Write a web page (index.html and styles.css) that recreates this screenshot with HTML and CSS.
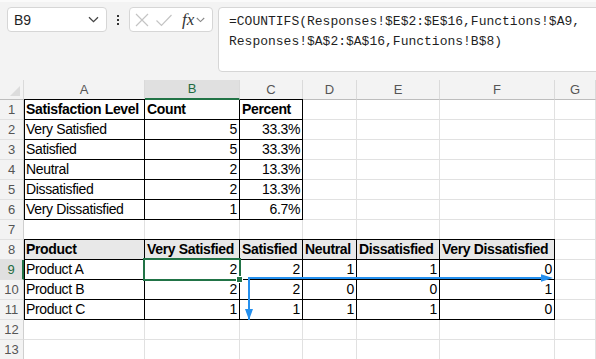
FILE: index.html
```html
<!DOCTYPE html>
<html>
<head>
    <meta charset="UTF-8">
    <link rel="stylesheet" href="styles.css">
</head>
<body>
    <!-- 编辑栏 -->
    <div class="bar">
        <div class="namebox">
            <span>B9</span>
            <svg class="chev" width="11" height="7" viewBox="0 0 11 7"><path d="M1 1.2 L5.5 5.6 L10 1.2" fill="none" stroke="#444" stroke-width="1.3"/></svg>
        </div>
        <div class="kebab"><i></i><i></i><i></i></div>
        <div class="fnbox">
            <svg width="16" height="16" viewBox="0 0 16 16"><path d="M2 2 L14 14 M14 2 L2 14" stroke="#c4c4c4" stroke-width="1.2"/></svg>
            <svg width="18" height="16" viewBox="0 0 18 16"><path d="M1.5 8.5 L6.5 13.5 L16.5 3" fill="none" stroke="#c4c4c4" stroke-width="1.2"/></svg>
            <span class="fx">fx</span>
            <svg width="9" height="6" viewBox="0 0 9 6"><path d="M0.8 1 L4.5 4.6 L8.2 1" fill="none" stroke="#888" stroke-width="1.1"/></svg>
        </div>
        <div class="formula">=COUNTIFS(Responses!$E$2:$E$16,Functions!$A9,<br>Responses!$A$2:$A$16,Functions!B$8)</div>
    </div>

    <!-- 表格 -->
    <div class="sheet">
        <div class="ch corner"></div><div class="ch">A</div><div class="ch sel">B</div><div class="ch">C</div><div class="ch">D</div><div class="ch">E</div><div class="ch">F</div><div class="ch">G</div>

        <div class="rh">1</div><div class="c b th tp lf">Satisfaction Level</div><div class="c b th tp">Count</div><div class="c b th tp">Percent</div><div class="c"></div><div class="c"></div><div class="c"></div><div class="c"></div>
        <div class="rh">2</div><div class="c b lf">Very Satisfied</div><div class="c b num">5</div><div class="c b num">33.3%</div><div class="c"></div><div class="c"></div><div class="c"></div><div class="c"></div>
        <div class="rh">3</div><div class="c b lf">Satisfied</div><div class="c b num">5</div><div class="c b num">33.3%</div><div class="c"></div><div class="c"></div><div class="c"></div><div class="c"></div>
        <div class="rh">4</div><div class="c b lf">Neutral</div><div class="c b num">2</div><div class="c b num">13.3%</div><div class="c"></div><div class="c"></div><div class="c"></div><div class="c"></div>
        <div class="rh">5</div><div class="c b lf">Dissatisfied</div><div class="c b num">2</div><div class="c b num">13.3%</div><div class="c"></div><div class="c"></div><div class="c"></div><div class="c"></div>
        <div class="rh">6</div><div class="c b lf">Very Dissatisfied</div><div class="c b num">1</div><div class="c b num">6.7%</div><div class="c"></div><div class="c"></div><div class="c"></div><div class="c"></div>
        <div class="rh">7</div><div class="c"></div><div class="c"></div><div class="c"></div><div class="c"></div><div class="c"></div><div class="c"></div><div class="c"></div>

        <div class="rh">8</div><div class="c b th gr tp lf">Product</div><div class="c b th gr tp">Very Satisfied</div><div class="c b th gr tp">Satisfied</div><div class="c b th gr tp">Neutral</div><div class="c b th gr tp">Dissatisfied</div><div class="c b th gr tp">Very Dissatisfied</div><div class="c"></div>
        <div class="rh sel">9</div><div class="c b lf">Product A</div><div class="c b num active">2</div><div class="c b num">2</div><div class="c b num">1</div><div class="c b num">1</div><div class="c b num">0</div><div class="c"></div>
        <div class="rh">10</div><div class="c b lf">Product B</div><div class="c b num">2</div><div class="c b num">2</div><div class="c b num">0</div><div class="c b num">0</div><div class="c b num">1</div><div class="c"></div>
        <div class="rh">11</div><div class="c b lf">Product C</div><div class="c b num">1</div><div class="c b num">1</div><div class="c b num">1</div><div class="c b num">1</div><div class="c b num">0</div><div class="c"></div>
        <div class="rh">12</div><div class="c"></div><div class="c"></div><div class="c"></div><div class="c"></div><div class="c"></div><div class="c"></div><div class="c"></div>
        <div class="rh">13</div><div class="c"></div><div class="c"></div><div class="c"></div><div class="c"></div><div class="c"></div><div class="c"></div><div class="c"></div>

        <!-- 追踪箭头 -->
        <svg class="arrows" width="596" height="279" viewBox="0 0 596 279">
            <path d="M249 240 L249 198 L542 198" fill="none" stroke="#2590ee" stroke-width="2"/>
            <polygon points="541,194.3 553,198 541,201.7" fill="#2590ee"/>
            <polygon points="245,229 253,229 249,240" fill="#2590ee"/>
        </svg>
    </div>
</body>
</html>
```

FILE: styles.css
```css
html,body,div,span{margin: 0;padding: 0;}
body{
    width: 596px;height: 359px;overflow: hidden;
    background: #fff;
    font-family: "Liberation Sans", Arial, sans-serif;
}

/* 编辑栏 */
.bar{
    height: 80px;background: #f3f3f3;
    box-sizing: border-box;padding: 5px 0 0 7px;
    display: flex;align-items: flex-start;
    overflow: hidden;
    border-top: 2px solid #fafafa;
}
.namebox{
    width: 100px;height: 25px;flex: none;
    box-sizing: border-box;border: 1px solid #d6d6d6;border-radius: 4px;
    background: #fff;
    display: flex;align-items: center;justify-content: space-between;
    padding: 0 7px 0 6px;
    font-size: 14px;color: #1f1f1f;
}
.kebab{
    width: 22px;height: 25px;flex: none;
    display: flex;flex-direction: column;align-items: center;justify-content: center;gap: 2px;
}
.kebab i{width: 2px;height: 2px;background: #333;display: block;}
.fnbox{
    width: 84px;height: 25px;flex: none;
    box-sizing: border-box;border: 1px solid #d6d6d6;border-radius: 4px;
    background: #fff;
    display: flex;align-items: center;
    padding: 0 0 0 4px;gap: 5px;
}
.fx{
    font-family: "Liberation Serif", "Times New Roman", serif;
    font-style: italic;font-size: 17px;color: #333;
    margin-left: 4px;margin-right: -3px;
}
.formula{
    width: 400px;height: 65px;flex: none;margin-left: 5px;
    box-sizing: border-box;border: 1px solid #d6d6d6;border-radius: 4px 0 0 4px;
    background: #fff;
    padding: 4px 0 0 10px;
    font-family: "Liberation Mono", "Courier New", monospace;
    font-size: 13px;line-height: 20px;color: #1f1f1f;
    white-space: nowrap;
}

/* 表格 */
.sheet{
    position: relative;
    display: grid;
    grid-template-columns: 24px 121px 95px 63px 54px 83px 115px 1fr;
    grid-auto-rows: 20px;
}
.ch,.rh,.c{
    box-sizing: border-box;
    border-right: 1px solid #e1e1e1;border-bottom: 1px solid #e1e1e1;
    white-space: nowrap;overflow: hidden;
    line-height: 19px;
}
.ch{
    background: #f3f3f3;border-right-color: #dadada;border-bottom-color: #bdbdbd;
    text-align: center;font-size: 13px;color: #555;
}
.ch.sel{
    background: #e0e0e0;color: #1e6b41;
    border-bottom: 2px solid #217346;line-height: 18px;
    position: relative;z-index: 1;
}
.corner{position: relative;}
.corner::after{
    content: "";position: absolute;right: 3px;bottom: 3px;
    border-left: 10px solid transparent;border-bottom: 10px solid #dcdcdc;
}
.rh{
    background: #f3f3f3;border-right-color: #cfcfcf;
    text-align: center;font-size: 13px;color: #555;
}
.rh.sel{background: #e0e0e0;color: #1e6b41;border-right: 2px solid #217346;}

.c{
    font-size: 14px;letter-spacing: -0.35px;color: #000;
    padding: 0 2px;
}
.b{border-right-color: #000;border-bottom-color: #000;}
.th{font-weight: bold;}
.gr{background: #e8e8e8;}
.num{text-align: right;}
.tp{box-shadow: 0 -1px 0 #000;}
.lf{box-shadow: inset 1px 0 0 #000;}
.tp.lf{box-shadow: inset 1px 0 0 #000, 0 -1px 0 #000;}

/* 当前单元格 */
.active{position: relative;overflow: visible;}
.active::after{
    content: "";position: absolute;left: -2px;top: -2px;right: -2px;bottom: -2px;
    border: 2px solid #217346;
}
.active::before{
    content: "";position: absolute;right: -4px;bottom: -4px;z-index: 1;
    width: 5px;height: 5px;background: #217346;border: 1px solid #fff;
}

.arrows{position: absolute;left: 0;top: 0;pointer-events: none;}
```
